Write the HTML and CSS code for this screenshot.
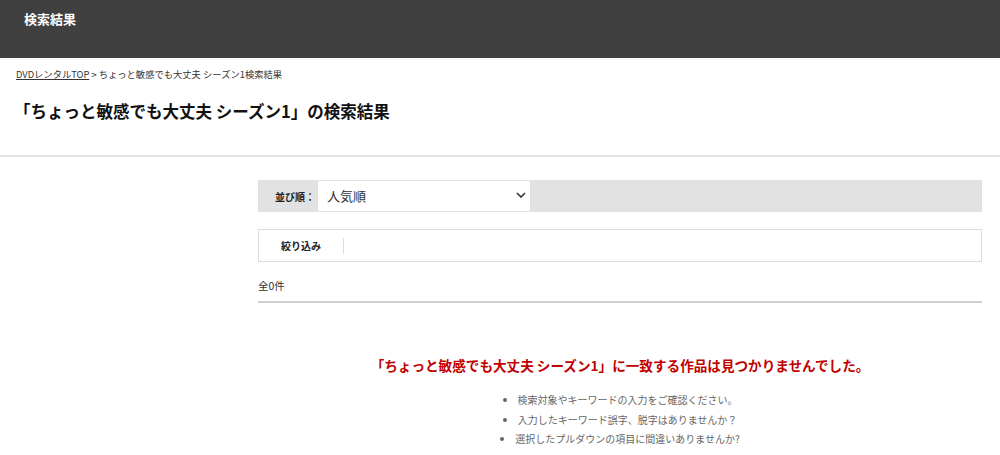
FILE: index.html
```html
<!DOCTYPE html>
<html lang="ja">
<head>
    <meta charset="UTF-8">
    <meta name="viewport" content="width=device-width, initial-scale=1.0">
    <title>検索結果</title>
    <link rel="stylesheet" href="styles.css">
</head>
<body>

<div class="header">
    <div class="header-title">検索結果</div>
</div>

<div class="breadcrumb">
    <a href="#">DVDレンタルTOP</a> &gt; ちょっと敏感でも大丈夫 シーズン1検索結果
</div>

<h1 class="page-title">「ちょっと敏感でも大丈夫 シーズン1」の検索結果</h1>

<div class="content">
    <div class="sort-bar">
        <span class="sort-label">並び順：</span>
        <div class="sort-select">
            <span>人気順</span>
            <svg width="10" height="6" viewBox="0 0 10 6"><path d="M1 1l4 4 4-4" fill="none" stroke="#333" stroke-width="1.6"/></svg>
        </div>
    </div>

    <div class="filter-box">
        <span class="filter-label">絞り込み</span>
        <span class="filter-sep"></span>
    </div>

    <div class="count">全0件</div>

    <div class="no-result">
        <p class="no-result-title">「ちょっと敏感でも大丈夫 シーズン1」に一致する作品は見つかりませんでした。</p>
        <ul>
            <li>検索対象やキーワードの入力をご確認ください。</li>
            <li>入力したキーワード誤字、脱字はありませんか？</li>
            <li>選択したプルダウンの項目に間違いありませんか?</li>
        </ul>
    </div>
</div>

</body>
</html>
```

FILE: styles.css
```css
body {
    font-family: "Noto Sans CJK JP", "Liberation Sans", sans-serif;
    margin: 0;
    color: #222222;
    background-color: #ffffff;
}
.header {
    height: 58px;
    background-color: #404040;
    padding: 0 24px;
}
.header-title {
    color: #ffffff;
    font-size: 13px;
    font-weight: bold;
    line-height: 38px;
}
.breadcrumb {
    font-size: 9.3px;
    color: #333333;
    padding: 9px 16px 0;
    line-height: 14px;
}
.breadcrumb a {
    color: #333333;
}
.page-title {
    font-size: 16.5px;
    font-weight: bold;
    margin: 0;
    padding: 18px 16px 0 14px;
    line-height: 24px;
    height: 56px;
    border-bottom: 2px solid #e2e2e2;
    color: #111111;
}
.content {
    margin: 23px 18px 0 258px;
}
.sort-bar {
    display: flex;
    align-items: center;
    height: 32px;
    background-color: #e2e2e2;
}
.sort-label {
    font-size: 10px;
    font-weight: bold;
    width: 60px;
    padding-left: 17px;
    box-sizing: border-box;
}
.sort-select {
    display: flex;
    align-items: center;
    justify-content: space-between;
    width: 212px;
    height: 30px;
    background-color: #ffffff;
    padding: 0 4px 2px 9px;
    box-sizing: border-box;
    font-size: 13px;
    color: #333333;
}
.filter-box {
    display: flex;
    align-items: center;
    height: 33px;
    margin-top: 17px;
    border: 1px solid #dddddd;
    box-sizing: border-box;
}
.filter-label {
    font-size: 10px;
    font-weight: bold;
    width: 84px;
    text-align: center;
}
.filter-sep {
    width: 1px;
    height: 16px;
    background-color: #dddddd;
}
.count {
    font-size: 10.5px;
    color: #333333;
    margin-top: 16px;
    padding-bottom: 8px;
    border-bottom: 2px solid #cfcfcf;
}
.no-result {
    text-align: center;
    padding-top: 52px;
}
.no-result-title {
    margin: 0;
    font-size: 13.6px;
    font-weight: bold;
    color: #c00000;
}
.no-result ul {
    list-style-position: inside;
    margin: 15px 0 0;
    padding: 0;
    font-size: 10px;
    color: #666666;
}
.no-result li {
    line-height: 19.5px;
}
```
